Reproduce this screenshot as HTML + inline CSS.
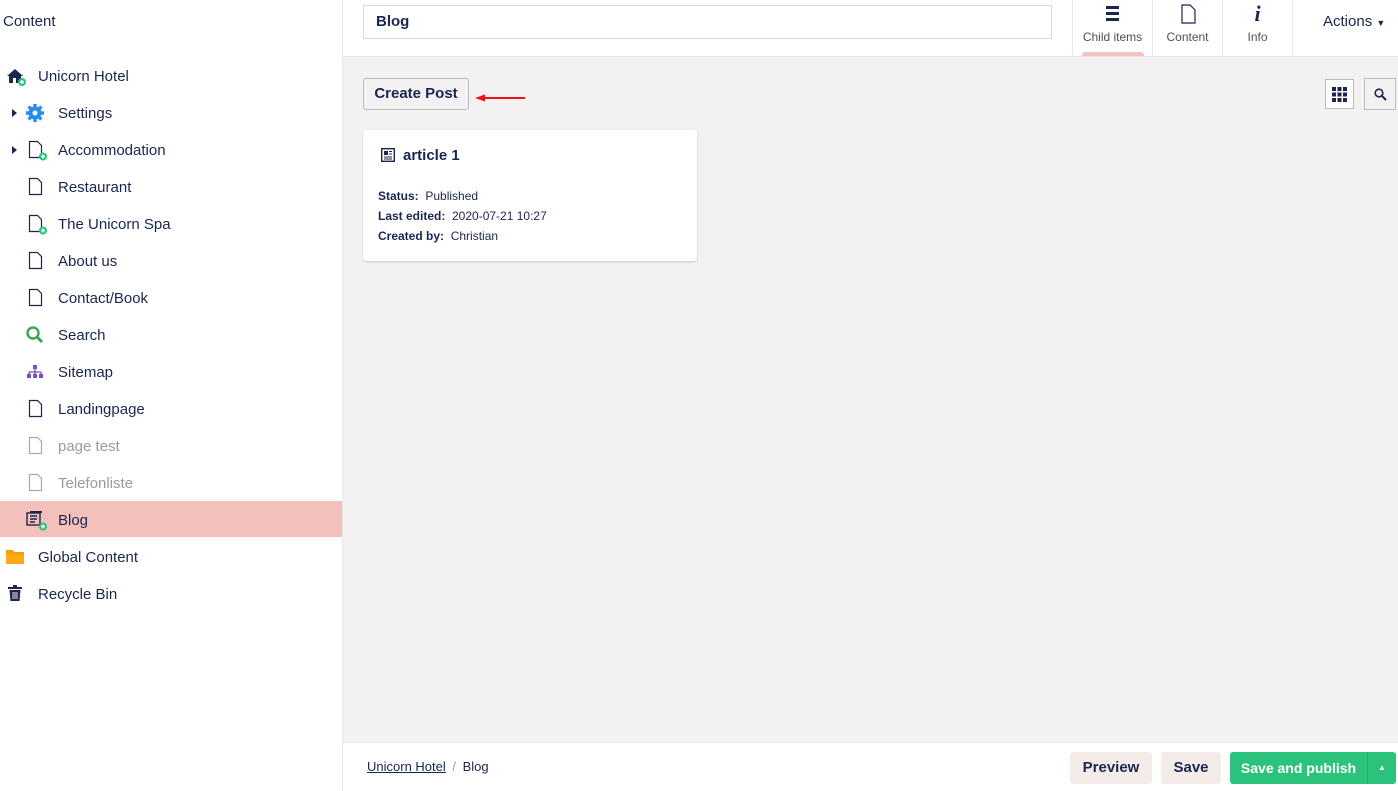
<!DOCTYPE html>
<html><head><meta charset="utf-8"><style>
*{box-sizing:border-box;margin:0;padding:0}
body{width:1398px;height:791px;overflow:hidden;font-family:"Liberation Sans",sans-serif;color:#1b264f;background:#fff;position:relative}
.side{position:absolute;left:0;top:0;width:343px;height:791px;background:#fff;border-right:1px solid #e9e9eb}
.side h1{font-size:15px;font-weight:normal;position:absolute;left:3px;top:13px;color:#1b264f}
.row{position:absolute;left:0;width:342px;height:37px;font-size:15px;line-height:39px}
.row span{position:absolute;top:0}
.ic{position:absolute}
.main{position:absolute;left:343px;top:0;right:0;bottom:0;background:#f3f1f1}
.top{position:absolute;left:0;top:0;right:0;height:57px;background:#fff;border-bottom:1px solid #e9e9eb}
.name{position:absolute;left:20px;top:5px;width:689px;height:34px;border:1px solid #d8d7d9;font-size:15px;font-weight:bold;padding-left:12px;line-height:32px}
.tab{position:absolute;top:0;height:56px;border-left:1px solid #e9e9eb;text-align:center;font-size:12px;color:#515054}
.tab .l{position:absolute;bottom:12px;left:0;right:0}
.foot{position:absolute;left:0;right:0;bottom:0;height:49px;background:#fff;border-top:1px solid #e9e9eb}
.btn{position:absolute;top:9px;height:32px;border-radius:3px;font-size:15px;font-weight:bold;line-height:32px;text-align:center}
</style></head><body>
<div class="side">
<h1>Content</h1>
<div class="row" style="top:57px"><svg class="ic" style="left:6px;top:10px" width="22" height="20" viewBox="0 0 22 20"><path d="M1 9L9 2l8 7h-2v7H3V9z" fill="#1b264f"/><rect x="7" y="11" width="3" height="5" fill="#fff"/><circle cx="16" cy="15" r="4" fill="#2bc37c"/><path d="M16 13v4M14 15h4" stroke="#fff" stroke-width="1.4"/></svg><span style="left:38px">Unicorn Hotel</span></div>
<div class="row" style="top:94px"><svg class="ic" style="left:12px;top:15px" width="6" height="8"><path d="M0 0l5 4-5 4z" fill="#1b264f"/></svg><svg class="ic" style="left:26px;top:10px" width="18" height="18" viewBox="0 0 18 18"><circle cx="9" cy="9" r="6.5" fill="#2a8af0"/><g stroke="#2a8af0" stroke-width="3.4"><path d="M9 0v18M0 9h18M2.6 2.6l12.8 12.8M15.4 2.6L2.6 15.4"/></g><circle cx="9" cy="9" r="2.5" fill="#fff"/></svg><span style="left:58px">Settings</span></div>
<div class="row" style="top:131px"><svg class="ic" style="left:12px;top:15px" width="6" height="8"><path d="M0 0l5 4-5 4z" fill="#1b264f"/></svg><svg class="ic" style="left:28px;top:9px" width="22" height="22"><path d="M1.5 1.5h8l4 4v12H1.5z" fill="none" stroke="#1b264f" stroke-width="1.2"/><circle cx="15" cy="16.5" r="4" fill="#2bc37c"/><path d="M15 14.5v4M13 16.5h4" stroke="#fff" stroke-width="1.4"/></svg><span style="left:58px">Accommodation</span></div>
<div class="row" style="top:168px"><svg class="ic" style="left:28px;top:9px" width="16" height="20"><path d="M1.5 1.5h8l4 4v12H1.5z" fill="none" stroke="#1b264f" stroke-width="1.2"/></svg><span style="left:58px">Restaurant</span></div>
<div class="row" style="top:205px"><svg class="ic" style="left:28px;top:9px" width="22" height="22"><path d="M1.5 1.5h8l4 4v12H1.5z" fill="none" stroke="#1b264f" stroke-width="1.2"/><circle cx="15" cy="16.5" r="4" fill="#2bc37c"/><path d="M15 14.5v4M13 16.5h4" stroke="#fff" stroke-width="1.4"/></svg><span style="left:58px">The Unicorn Spa</span></div>
<div class="row" style="top:242px"><svg class="ic" style="left:28px;top:9px" width="16" height="20"><path d="M1.5 1.5h8l4 4v12H1.5z" fill="none" stroke="#1b264f" stroke-width="1.2"/></svg><span style="left:58px">About us</span></div>
<div class="row" style="top:279px"><svg class="ic" style="left:28px;top:9px" width="16" height="20"><path d="M1.5 1.5h8l4 4v12H1.5z" fill="none" stroke="#1b264f" stroke-width="1.2"/></svg><span style="left:58px">Contact/Book</span></div>
<div class="row" style="top:316px"><svg class="ic" style="left:25px;top:9px" width="20" height="20"><circle cx="8" cy="8" r="5.5" fill="none" stroke="#3ba755" stroke-width="2.4"/><path d="M12 12l5 5" stroke="#3ba755" stroke-width="3"/></svg><span style="left:58px">Search</span></div>
<div class="row" style="top:353px"><svg class="ic" style="left:26px;top:12px" width="18" height="14"><rect x="7" y="0" width="4" height="4" fill="#7a4ec4"/><path d="M9 4v3M3 7h12M3 7v3M9 7v3M15 7v3" stroke="#7a4ec4" stroke-width="1.3" fill="none"/><rect x="1" y="9" width="4" height="4" fill="#7a4ec4"/><rect x="7" y="9" width="4" height="4" fill="#7a4ec4"/><rect x="13" y="9" width="4" height="4" fill="#7a4ec4"/></svg><span style="left:58px">Sitemap</span></div>
<div class="row" style="top:390px"><svg class="ic" style="left:28px;top:9px" width="16" height="20"><path d="M1.5 1.5h8l4 4v12H1.5z" fill="none" stroke="#1b264f" stroke-width="1.2"/></svg><span style="left:58px">Landingpage</span></div>
<div class="row" style="top:427px;color:#9b9aa3"><svg class="ic" style="left:28px;top:9px" width="16" height="20"><path d="M1.5 1.5h8l4 4v12H1.5z" fill="none" stroke="#a8a8b5" stroke-width="1.2"/></svg><span style="left:58px">page test</span></div>
<div class="row" style="top:464px;color:#9b9aa3"><svg class="ic" style="left:28px;top:9px" width="16" height="20"><path d="M1.5 1.5h8l4 4v12H1.5z" fill="none" stroke="#a8a8b5" stroke-width="1.2"/></svg><span style="left:58px">Telefonliste</span></div>
<div class="row" style="top:501px;height:36px;background:#f4c0bc"><svg class="ic" style="left:26px;top:9px" width="22" height="22"><rect x="1" y="3" width="13" height="12" fill="none" stroke="#1b264f" stroke-width="1.4"/><rect x="4" y="1" width="12" height="2" fill="#1b264f"/><path d="M4 6h7M4 9h7M4 12h5" stroke="#1b264f" stroke-width="1.4"/><circle cx="17" cy="16.5" r="4" fill="#2bc37c"/><path d="M17 14.5v4M15 16.5h4" stroke="#fff" stroke-width="1.4"/></svg><span style="left:58px">Blog</span></div>
<div class="row" style="top:538px"><svg class="ic" style="left:6px;top:11px" width="18" height="15"><path d="M0 1h7l1.5 2H18v12H0z" fill="#f79c0d"/><path d="M0 5h18v10H0z" fill="#ffa81a"/></svg><span style="left:38px">Global Content</span></div>
<div class="row" style="top:575px"><svg class="ic" style="left:8px;top:10px" width="14" height="17"><rect x="0" y="2" width="14" height="2" fill="#1b264f"/><rect x="5" y="0" width="4" height="2" fill="#1b264f"/><path d="M1.5 5h11l-1 11h-9z" fill="#1b264f"/><path d="M5 7v7M7 7v7M9 7v7" stroke="#fff" stroke-width=".9"/></svg><span style="left:38px">Recycle Bin</span></div>
</div>
<div class="main">
<div class="top">
<div class="name">Blog</div>
<div class="tab" style="left:729px;width:80px"><svg style="position:absolute;left:33px;top:6px" width="13" height="15"><rect y="0" width="13" height="3" fill="#1b264f"/><rect y="6" width="13" height="3" fill="#1b264f"/><rect y="12" width="13" height="3" fill="#1b264f"/></svg><div class="l">Child items</div><div style="position:absolute;left:9px;right:8px;bottom:0;height:4px;background:#f5c1bc;border-radius:3px 3px 0 0"></div></div>
<div class="tab" style="left:809px;width:70px"><svg style="position:absolute;left:28px;top:4px" width="15" height="20"><path d="M1 1h8l5 5v13H1z" fill="none" stroke="#1b264f" stroke-width="1.2"/></svg><div class="l">Content</div></div>
<div class="tab" style="left:879px;width:70px"><div style="position:absolute;left:0;right:0;top:1px;font:italic bold 22px 'Liberation Serif',serif;color:#1b264f">i</div><div class="l">Info</div></div>
<div class="tab" style="left:949px;width:106px"><div style="position:absolute;left:30px;top:13px;font-size:15px;color:#1b264f">Actions <span style="font-size:9px">▼</span></div></div>
</div>
<div style="position:absolute;left:20px;top:78px;width:106px;height:32px;border:1px solid #bbbabf;border-radius:3px;background:#f3f1f1;font-size:15px;font-weight:bold;line-height:30px;text-align:center">Create Post</div>
<svg style="position:absolute;left:130px;top:93px" width="55" height="10"><path d="M52 5H10" stroke="#e11" stroke-width="2"/><path d="M2 5l10-3.5v7z" fill="#e11"/></svg>
<div style="position:absolute;left:982px;top:79px;width:29px;height:30px;border:1px solid #bbbabf;background:#fff"><svg style="position:absolute;left:6px;top:7px" width="15" height="15"><g fill="#1b264f"><rect x="0" y="0" width="4" height="4"/><rect x="5.5" y="0" width="4" height="4"/><rect x="11" y="0" width="4" height="4"/><rect x="0" y="5.5" width="4" height="4"/><rect x="5.5" y="5.5" width="4" height="4"/><rect x="11" y="5.5" width="4" height="4"/><rect x="0" y="11" width="4" height="4"/><rect x="5.5" y="11" width="4" height="4"/><rect x="11" y="11" width="4" height="4"/></g></svg></div>
<div style="position:absolute;left:1021px;top:78px;width:32px;height:32px;border:1px solid #bbbabf"><svg style="position:absolute;left:9px;top:9px" width="13" height="13"><circle cx="5" cy="5" r="3.8" fill="none" stroke="#1b264f" stroke-width="1.6"/><path d="M8 8l4 4" stroke="#1b264f" stroke-width="2"/></svg></div>
<div style="position:absolute;left:20px;top:130px;width:334px;height:131px;background:#fff;border-radius:3px;box-shadow:0 1px 2px rgba(0,0,0,.18)">
<svg style="position:absolute;left:18px;top:18px" width="14" height="14"><rect x=".7" y=".7" width="12.6" height="12.6" fill="none" stroke="#1b264f" stroke-width="1.4"/><rect x="3" y="3" width="4" height="4" fill="#1b264f"/><path d="M8 3.5h3M8 6h3M3 9h8M3 11h8" stroke="#1b264f" stroke-width="1.1"/></svg>
<div style="position:absolute;left:40px;top:17px;font-size:15px;font-weight:bold">article 1</div>
<div style="position:absolute;left:15px;top:56px;font-size:12px;line-height:20px"><b>Status:</b>&nbsp; Published<br><b>Last edited:</b>&nbsp; 2020-07-21 10:27<br><b>Created by:</b>&nbsp; Christian</div>
</div>
<div class="foot">
<div style="position:absolute;left:24px;top:16px;font-size:13px"><span style="text-decoration:underline">Unicorn Hotel</span> <span style="color:#999;margin:0 3px">/</span> Blog</div>
<div class="btn" style="left:727px;width:82px;background:#f3ece9">Preview</div>
<div class="btn" style="left:818px;width:60px;background:#f3ece9">Save</div>
<div class="btn" style="left:887px;width:166px;background:#2bc37c;color:#fff;font-size:14px"><span style="position:absolute;left:0;width:137px">Save and publish</span><span style="position:absolute;left:137px;top:0;width:1px;height:32px;background:#24a96a"></span><span style="position:absolute;left:138px;width:28px;font-size:8px">▲</span></div>
</div>
</div>
</body></html>
